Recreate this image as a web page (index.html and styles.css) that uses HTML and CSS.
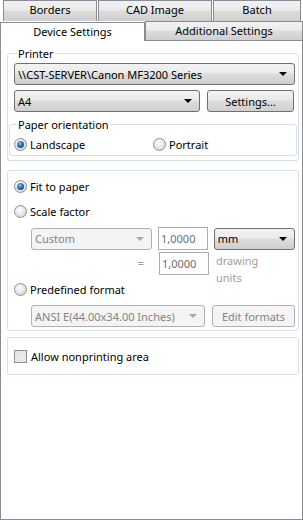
FILE: index.html
```html
<!DOCTYPE html>
<html lang="en">

<head>
    <meta charset="UTF-8">
    <title>Device Settings</title>
    <link rel="stylesheet" href="styles.css">
</head>

<body>
    <div class="tabs">
        <div class="tab-row back">
            <div class="tab w-borders">Borders</div>
            <div class="tab w-cad">CAD Image</div>
            <div class="tab w-batch">Batch</div>
        </div>
        <div class="tab-row front">
            <div class="tab active w-device">Device Settings</div>
            <div class="tab w-additional">Additional Settings</div>
        </div>
    </div>

    <div class="panel">
        <fieldset class="group printer">
            <legend>Printer</legend>
            <div class="combo full">
                <span>\\CST-SERVER\Canon MF3200 Series</span>
                <span class="arrow"></span>
            </div>
            <div class="row">
                <div class="combo paper">
                    <span>A4</span>
                    <span class="arrow"></span>
                </div>
                <button class="btn settings">Settings...</button>
            </div>
            <fieldset class="group orientation">
                <legend>Paper orientation</legend>
                <div class="row radios">
                    <label class="radio landscape"><span class="dot checked"></span>Landscape</label>
                    <label class="radio"><span class="dot"></span>Portrait</label>
                </div>
            </fieldset>
        </fieldset>

        <div class="group scale">
            <label class="radio"><span class="dot checked"></span>Fit to paper</label>
            <label class="radio"><span class="dot"></span>Scale factor</label>
            <div class="row indent">
                <div class="combo disabled custom">
                    <span>Custom</span>
                    <span class="arrow"></span>
                </div>
                <div class="input">1,0000</div>
                <div class="combo units">
                    <span>mm</span>
                    <span class="arrow"></span>
                </div>
            </div>
            <div class="row indent second">
                <span class="eq">=</span>
                <div class="input">1,0000</div>
                <span class="hint">drawing<br>units</span>
            </div>
            <label class="radio predefined"><span class="dot"></span>Predefined format</label>
            <div class="row indent">
                <div class="combo disabled ansi">
                    <span>ANSI E(44.00x34.00 Inches)</span>
                    <span class="arrow"></span>
                </div>
                <button class="btn disabled edit">Edit formats</button>
            </div>
        </div>

        <div class="group extra">
            <label class="check"><span class="box"></span>Allow nonprinting area</label>
        </div>
    </div>
</body>

</html>
```

FILE: styles.css
```css
body {
    margin: 0;
    width: 303px;
    height: 520px;
    background: #fff;
    font-family: "Noto Sans", sans-serif;
    font-size: 11px;
    color: #000;
    overflow: hidden;
}

/* tabs */
.tabs {
    height: 40px;
}

.tab-row {
    display: flex;
}

.tab-row.back {
    padding-left: 3px;
    height: 21px;
}

.tab-row.front {
    height: 22px;
    margin-top: -3px;
    align-items: flex-end;
    position: relative;
}

.tab {
    box-sizing: border-box;
    border: 1px solid #898c95;
    border-bottom: none;
    background: linear-gradient(#f2f2f2, #ebebeb 45%, #dddddd 50%, #cfcfcf);
    text-align: center;
    height: 21px;
    line-height: 18px;
}

.tab-row.back .tab {
    margin-right: 1px;
}

.tab-row.front .tab {
    height: 19px;
    line-height: 18px;
}

.tab.active {
    height: 23px;
    background: #fff;
    line-height: 17px;
    position: relative;
    z-index: 1;
    margin-bottom: -1px;
}

.w-borders { width: 94px; }
.w-cad { width: 114px; }
.w-batch { width: 88px; }
.w-device { width: 145px; }
.w-additional { width: 158px; }

/* panel */
.panel {
    box-sizing: border-box;
    height: 480px;
    border: 1px solid #898c95;
    padding: 6px 3px 0 6px;
}

.group {
    border: 1px solid #d5dfe5;
    border-radius: 3px;
    margin: 0;
    padding: 0;
    min-width: 0;
}

legend {
    padding: 0 1px;
    margin-left: 3px;
    line-height: 13px;
}

.printer {
    padding: 0 3px 4px 6px;
}

.orientation {
    margin: 6px -2px 0 -5px;
    padding: 0 0 3px 4px;
}

.row {
    display: flex;
    align-items: center;
}

.combo {
    box-sizing: border-box;
    display: flex;
    align-items: center;
    justify-content: space-between;
    height: 22px;
    border: 1px solid #707070;
    border-radius: 3px;
    background: linear-gradient(#f2f2f2, #ebebeb 45%, #dddddd 50%, #cfcfcf);
    padding: 0 7px 0 3px;
}

.arrow {
    width: 0;
    height: 0;
    border-left: 4px solid transparent;
    border-right: 4px solid transparent;
    border-top: 4px solid #000;
}

.combo.full {
    margin-top: 3px;
}

.printer .row {
    margin-top: 5px;
}

.combo.paper {
    width: 186px;
}

.btn {
    box-sizing: border-box;
    font: inherit;
    height: 22px;
    border: 1px solid #707070;
    border-radius: 3px;
    background: linear-gradient(#f2f2f2, #ebebeb 45%, #dddddd 50%, #cfcfcf);
    padding: 0;
}

.btn.settings {
    width: 87px;
    margin-left: 7px;
}

.radio, .check {
    display: flex;
    align-items: center;
    height: 16px;
}

.dot {
    box-sizing: border-box;
    width: 13px;
    height: 13px;
    border-radius: 50%;
    border: 1px solid #8e8f8f;
    background: radial-gradient(circle at 40% 35%, #fff, #dcdcdc 70%, #cfcfcf);
    margin-right: 3px;
    display: flex;
    align-items: center;
    justify-content: center;
}

.dot.checked::after {
    content: "";
    width: 7px;
    height: 7px;
    border-radius: 50%;
    background: radial-gradient(circle at 40% 35%, #7ec4f4, #1d5fa0 55%, #0c3a72);
}

.landscape {
    width: 139px;
}

.scale {
    margin-top: 9px;
    padding: 7px 3px 3px 6px;
}

.scale .radio + .radio {
    margin-top: 9px;
}

.indent {
    padding-left: 17px;
}

.scale .row {
    margin-top: 8px;
}

.combo.disabled {
    border-color: #adb2b5;
    background: #f4f4f4;
    color: #838383;
}

.combo.disabled .arrow {
    border-top-color: #a8a8a8;
}

.combo.custom {
    width: 122px;
}

.input {
    box-sizing: border-box;
    width: 50px;
    height: 23px;
    border: 1px solid #abadb3;
    background: #fff;
    padding: 3px 2px;
    color: #6d6d6d;
    margin-left: 6px;
}

.combo.units {
    width: 82px;
    margin-left: 6px;
}

.scale .row.second {
    margin-top: 2px;
    align-items: flex-start;
}

.eq {
    box-sizing: border-box;
    width: 122px;
    padding: 3px 9px 0 0;
    text-align: right;
    color: #a0a0a0;
}

.hint {
    color: #a0a0a0;
    margin-left: 7px;
    line-height: 17px;
}

.scale .radio.predefined {
    margin-top: -5px;
}

.combo.ansi {
    width: 174px;
}

.btn.disabled {
    border-color: #adb2b5;
    background: #f4f4f4;
    color: #838383;
}

.btn.edit {
    width: 83px;
    margin-left: 7px;
}

.extra {
    margin-top: 6px;
    padding: 10px 6px;
}

.box {
    box-sizing: border-box;
    width: 13px;
    height: 13px;
    border: 1px solid #8e8f8f;
    background: linear-gradient(135deg, #dcdcdc, #f6f6f6);
    box-shadow: inset 0 0 0 2px #e6e6e6;
    margin-right: 4px;
}
```
